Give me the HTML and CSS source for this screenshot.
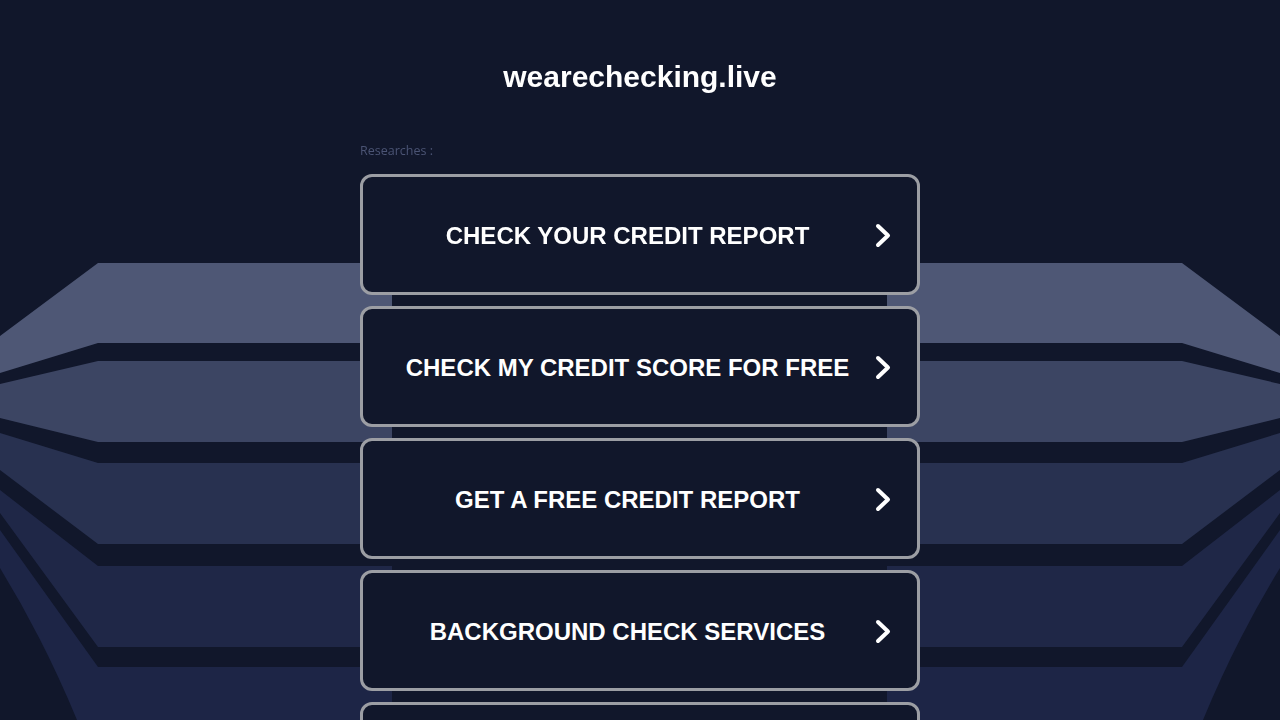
FILE: index.html
```html
<!DOCTYPE html>
<html lang="en">
<head>
  <meta charset="UTF-8" />
  <meta name="viewport" content="width=device-width, initial-scale=1.0" />
  <title>wearechecking.live</title>
  <link rel="stylesheet" href="styles.css">
</head>
<body>

<!-- Background shapes -->
<svg class="backdrop" viewBox="0 0 1280 720" preserveAspectRatio="none">
  <polygon fill="#4e5775" points="98,263 1182,263 1280,336 1280,373 1182,343 98,343 0,373 0,336" />
  <polygon fill="#3c4563" points="98,361 1182,361 1280,384 1280,418 1182,442 98,442 0,418 0,384" />
  <polygon fill="#283150" points="98,463 1182,463 1280,433 1280,470 1182,544 98,544 0,470 0,433" />
  <polygon fill="#1f2747" points="98,566 1182,566 1280,490 1280,513 1182,647 98,647 0,513 0,490" />
  <path fill="#1d2546" d="M98,667 L1182,667 L1280,530 L1280,568 Q1236,640 1203,720 L77,720 Q44,640 0,568 L0,530 Z" />
  <rect fill="#11172b" x="392" y="255" width="495" height="480" rx="30" />
</svg>

<div class="page">
  <h1 class="domain">wearechecking.live</h1>

  <div class="results">
    <p class="results-label">Researches :</p>

    <a class="card" href="#">
      <span class="card-text">CHECK YOUR CREDIT REPORT</span>
      <svg class="chevron" viewBox="0 0 16 25"><polyline points="3,3 13,12.5 3,22" /></svg>
    </a>
    <a class="card" href="#">
      <span class="card-text">CHECK MY CREDIT SCORE FOR FREE</span>
      <svg class="chevron" viewBox="0 0 16 25"><polyline points="3,3 13,12.5 3,22" /></svg>
    </a>
    <a class="card" href="#">
      <span class="card-text">GET A FREE CREDIT REPORT</span>
      <svg class="chevron" viewBox="0 0 16 25"><polyline points="3,3 13,12.5 3,22" /></svg>
    </a>
    <a class="card" href="#">
      <span class="card-text">BACKGROUND CHECK SERVICES</span>
      <svg class="chevron" viewBox="0 0 16 25"><polyline points="3,3 13,12.5 3,22" /></svg>
    </a>
    <a class="card" href="#">
      <span class="card-text">FREE CREDIT SCORE CHECK</span>
      <svg class="chevron" viewBox="0 0 16 25"><polyline points="3,3 13,12.5 3,22" /></svg>
    </a>
  </div>
</div>

</body>
</html>
```

FILE: styles.css
```css
/* General Styles */
body {
  margin: 0;
  padding: 0;
  background-color: #11172b;
  font-family: "Liberation Sans", Arial, sans-serif;
  color: #ffffff;
  overflow: hidden;
}

.backdrop {
  position: fixed;
  top: 0;
  left: 0;
  width: 100%;
  height: 100%;
  z-index: 0;
}

.page {
  position: relative;
  z-index: 1;
  display: flex;
  flex-direction: column;
  align-items: center;
  padding-top: 60px;
}

.domain {
  margin: 0;
  font-size: 30px;
  line-height: 34px;
  font-weight: bold;
  color: #ffffff;
}

/* Result list */
.results {
  width: 560px;
  margin-top: 48px;
  display: flex;
  flex-direction: column;
  gap: 11px;
}

.results-label {
  margin: 0 0 4px;
  font-family: "Open Sans", "Noto Sans", sans-serif;
  font-size: 12.5px;
  line-height: 17px;
  color: #4b5474;
}

.card {
  box-sizing: border-box;
  height: 121px;
  display: flex;
  align-items: center;
  padding: 2px 26px 0 17px;
  border: 3px solid #9c9ea4;
  border-radius: 12px;
  background-color: #11172b;
  color: #ffffff;
  text-decoration: none;
}

.card-text {
  flex: 1;
  text-align: center;
  font-size: 24px;
  font-weight: bold;
}

.chevron {
  width: 16px;
  height: 25px;
  fill: none;
  stroke: #ffffff;
  stroke-width: 4;
  stroke-linecap: round;
  stroke-linejoin: round;
}
```
